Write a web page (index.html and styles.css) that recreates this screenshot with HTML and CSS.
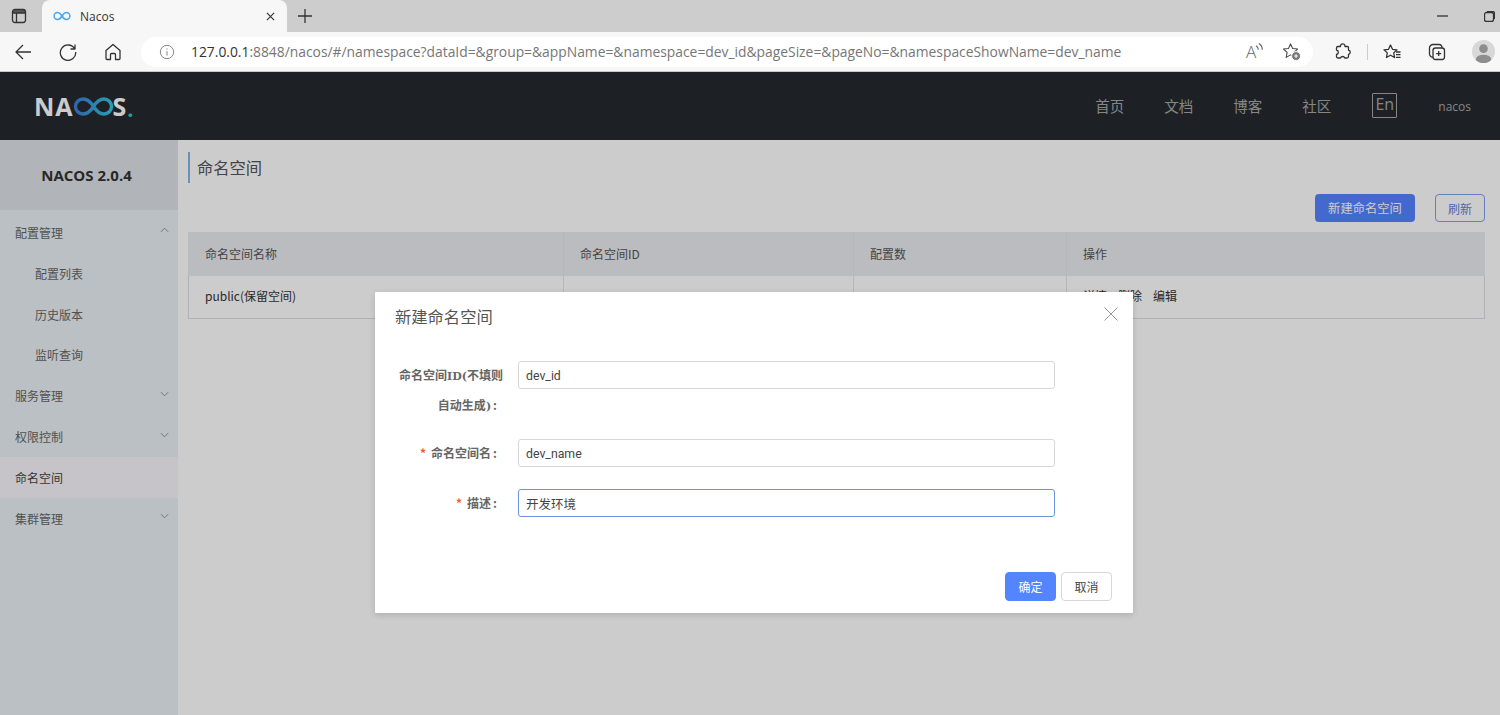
FILE: index.html
```html
<!DOCTYPE html>
<html lang="zh">
<head>
<meta charset="utf-8">
<title>Nacos</title>
<link rel="stylesheet" href="styles.css">
</head>
<body>
<div class="tabbar">
  <svg class="ic tabs-ic" viewBox="0 0 16 16"><rect x="1.500" y="1.500" width="13" height="13" rx="2.500"/><path d="M1.500 5h13M5.500 5v9.500"/><path class="fill" d="M2 2h12v3H2z"/></svg>
  <div class="tab">
    <svg class="fav" viewBox="0 0 18 10"><path d="M9 5C7.500 2.600 6.300 1.500 4.600 1.500a3.500 3.500 0 0 0 0 7C6.300 8.500 7.500 7.400 9 5c1.500-2.400 2.700-3.500 4.400-3.500a3.500 3.500 0 0 1 0 7C11.700 8.500 10.500 7.400 9 5z"/></svg>
    <span class="tab-title">Nacos</span>
    <svg class="ic tab-x" viewBox="0 0 10 10"><path d="M1 1l8 8M9 1l-8 8"/></svg>
  </div>
  <svg class="ic plus" viewBox="0 0 14 14"><path d="M7 0v14M0 7h14"/></svg>
  <div class="win">
    <svg class="ic win-min" viewBox="0 0 11 2"><path d="M0 1h11"/></svg>
    <svg class="ic win-max" viewBox="0 0 11 11"><rect x="0.500" y="1.500" width="9" height="9" rx="2"/><path d="M3 .5h5.500a2 2 0 0 1 2 2V8"/></svg>
  </div>
</div>
<div class="toolbar">
  <svg class="ic nav back" viewBox="0 0 18 18"><path d="M17 9H2M9 2L2 9l7 7"/></svg>
  <svg class="ic nav reload" viewBox="0 0 18 18"><path d="M15.500 5.500A7.700 7.700 0 1 0 16.700 9M16 1.500v4.500h-4.500"/></svg>
  <svg class="ic nav home" viewBox="0 0 18 18"><path d="M2 7.500L9 1.500l7 6v8a1 1 0 0 1-1 1h-3.500v-5a1 1 0 0 0-1-1h-3a1 1 0 0 0-1 1v5H3a1 1 0 0 1-1-1z"/></svg>
  <div class="urlbar">
    <svg class="ic info" viewBox="0 0 18 18"><circle cx="9" cy="9" r="7.500"/><path d="M9 8v5M9 5v1.200"/></svg>
    <span class="url"><span class="url-host">127.0.0.1</span>:8848/nacos/#/namespace?dataId=&amp;group=&amp;appName=&amp;namespace=dev_id&amp;pageSize=&amp;pageNo=&amp;namespaceShowName=dev_name</span>
    <span class="read">A<svg class="ic waves" viewBox="0 0 8 9"><path d="M1 3c1.200.8 1.800 1.800 2 3.500M3.500 1c1.800 1.200 3 3 3 5.500"/></svg></span>
    <svg class="ic fav-add" viewBox="0 0 20 20"><path d="M9 2l2.200 4.800 5.200.6-3.800 3.600 1 5.200L9 13.600l-4.600 2.600 1-5.200-3.800-3.600 5.200-.6z"/><circle class="dot" cx="14.800" cy="14.800" r="4.700"/><path class="dot-plus" d="M14.800 12.800v4M12.800 14.800h4"/></svg>
  </div>
  <svg class="ic tool puzzle" viewBox="0 0 18 18"><path d="M6.500 2.500a2.300 2.300 0 0 1 4.400 0L11 3.500h2.500a1 1 0 0 1 1 1V7a2.200 2.200 0 0 1 0 4.300v2.200a1.500 1.500 0 0 1-1.500 1.500h-2.200a2.300 2.300 0 0 0-4.300 0H4a1.500 1.500 0 0 1-1.500-1.500v-2a2.300 2.300 0 0 0 0-4.500V5A1.500 1.500 0 0 1 4 3.500h2.500z"/></svg>
  <span class="sep"></span>
  <svg class="ic tool favs" viewBox="0 0 18 18"><path d="M7.500 2l2 4.300 4.500.5-3.300 3.100.9 4.600-4.100-2.300-4.100 2.300.9-4.600L1 6.800l4.500-.5z"/><path d="M13 9h4.500M13 11.700h4.500M13 14.400h4.500"/></svg>
  <svg class="ic tool colls" viewBox="0 0 18 18"><rect x="5" y="5" width="11.500" height="11.500" rx="2.500"/><path d="M5 14a3 3 0 0 1-3.500-3V5a3.500 3.500 0 0 1 3.500-3.500h6a3 3 0 0 1 3 3.500M10.700 8v5M8.200 10.700h5"/></svg>
  <span class="avatar"><svg viewBox="0 0 24 24"><circle cx="12" cy="9" r="4.500"/><ellipse cx="12" cy="20" rx="8" ry="4.500"/></svg></span>
</div>

<div class="page">
  <header class="topnav">
    <div class="logo"><span>NA</span><svg class="logo-mark" viewBox="0 0 41 19"><defs><linearGradient id="lg" x1="0" y1="0" x2="1" y2="0"><stop offset="0" stop-color="#3b7fd6"/><stop offset="1" stop-color="#35c5dc"/></linearGradient></defs><path d="M20.500 9.500C17 4 14 2 10 2a7.500 7.500 0 0 0 0 15c4 0 7-2 10.500-7.500 3.500-5.500 6.500-7.500 10.500-7.500a7.500 7.500 0 0 1 0 15c-4 0-7-2-10.500-7.500z"/></svg><span>S</span><span class="logo-dot">.</span></div>
    <nav class="menu">
      <a class="menu-item">首页</a>
      <a class="menu-item">文档</a>
      <a class="menu-item">博客</a>
      <a class="menu-item">社区</a>
      <span class="lang">En</span>
      <span class="user">nacos</span>
    </nav>
  </header>
  <div class="content">
    <aside class="side">
      <div class="side-title">NACOS 2.0.4</div>
      <ul class="side-list">
        <li class="side-item">配置管理<svg class="chev" viewBox="0 0 10 6"><path d="M1 5l4-4 4 4"/></svg></li>
        <li class="side-item sub">配置列表</li>
        <li class="side-item sub">历史版本</li>
        <li class="side-item sub">监听查询</li>
        <li class="side-item">服务管理<svg class="chev" viewBox="0 0 10 6"><path d="M1 1l4 4 4-4"/></svg></li>
        <li class="side-item">权限控制<svg class="chev" viewBox="0 0 10 6"><path d="M1 1l4 4 4-4"/></svg></li>
        <li class="side-item active">命名空间</li>
        <li class="side-item">集群管理<svg class="chev" viewBox="0 0 10 6"><path d="M1 1l4 4 4-4"/></svg></li>
      </ul>
    </aside>
    <main class="main">
      <h1 class="title">命名空间</h1>
      <div class="actions">
        <button class="btn primary">新建命名空间</button>
        <button class="btn ghost">刷新</button>
      </div>
      <div class="table">
        <div class="row head">
          <div class="cell c1">命名空间名称</div>
          <div class="cell c2">命名空间ID</div>
          <div class="cell c3">配置数</div>
          <div class="cell c4">操作</div>
        </div>
        <div class="row body-row">
          <div class="cell c1">public(保留空间)</div>
          <div class="cell c2"></div>
          <div class="cell c3"></div>
          <div class="cell c4"><span class="op">详情</span><span class="op">删除</span><span class="op">编辑</span></div>
        </div>
      </div>
    </main>
  </div>
  <div class="mask"></div>
  <div class="dialog">
    <div class="dlg-head">新建命名空间</div>
    <svg class="dlg-x" viewBox="0 0 14 14"><path d="M.5.5l13 13M13.500.5l-13 13"/></svg>
    <form class="dlg-form">
      <div class="field f-id">
        <label class="lbl"><span class="lbl-over">命名空间<b class="lat">ID(</b>不填则</span><span class="lbl-line">自动生成<b class="lat">)</b><span class="colon">:</span></span></label>
        <div class="input">dev_id</div>
      </div>
      <div class="field f-name">
        <label class="lbl"><i class="req">*</i>命名空间名<span class="colon">:</span></label>
        <div class="input">dev_name</div>
      </div>
      <div class="field f-desc">
        <label class="lbl"><i class="req">*</i>描述<span class="colon">:</span></label>
        <div class="input focus">开发环境</div>
      </div>
    </form>
    <div class="dlg-foot">
      <button class="btn ok">确定</button>
      <button class="btn cancel">取消</button>
    </div>
  </div>
</div>
</body>
</html>
```
FILE: styles.css
```css
* { box-sizing: border-box; }
html, body { margin: 0; height: 715px; overflow: hidden; }
body { font-family: "Noto Sans CJK SC", "Open Sans", sans-serif; background: #fff; color: #333; }
ul { list-style: none; margin: 0; padding: 0; }
.ic { fill: none; stroke: #333; stroke-width: 1.300; flex: none; stroke-linejoin: round; }

.tabbar { height: 32px; background: #cdcdcd; display: flex; align-items: center; position: relative; }
.tabs-ic { width: 16px; height: 16px; margin-left: 11px; }
.tabs-ic .fill { fill: #333; stroke: none; opacity: .75; }
.tab { width: 245px; height: 32px; margin-left: 15px; background: #f7f7f7; border-radius: 8px 8px 0 0; display: flex; align-items: center; padding: 0 10px; font-family: "Open Sans", sans-serif; font-size: 12px; color: #333; }
.fav { width: 18px; height: 10px; margin-left: 1px; fill: none; stroke: #4aa6ef; stroke-width: 1.500; }
.tab-title { margin-left: 9px; flex: 1; }
.tab-x { width: 9px; height: 9px; margin-right: 2px; stroke-width: 1.300; }
.plus { width: 14px; height: 14px; margin-left: 11px; }
.win { margin-left: auto; display: flex; align-items: center; gap: 36px; padding-right: 5px; }
.win-min { width: 11px; height: 2px; }
.win-max { width: 11px; height: 11px; }

.toolbar { height: 40px; background: #f7f7f7; display: flex; align-items: center; border-bottom: 1px solid #c9c9c9; }
.nav { width: 18px; height: 18px; }
.back { margin-left: 14px; }
.reload { margin-left: 27px; }
.home { margin-left: 27px; }
.urlbar { margin-left: 19px; width: 1172px; height: 30px; background: #fff; border-radius: 15px; display: flex; align-items: center; padding-left: 18px; }
.info { width: 16px; height: 16px; stroke: #777; stroke-width: 1; }
.url { margin-left: 16px; font-family: "Open Sans", sans-serif; font-size: 13.850px; color: #767676; white-space: nowrap; width: 1038px; overflow: hidden; }
.url-host { color: #333; }
.read { font-family: "Open Sans", sans-serif; font-weight: 300; font-size: 17px; color: #666; width: 20px; position: relative; margin-left: 17px; line-height: 20px; }
.waves { width: 9px; height: 11px; position: absolute; left: 9px; top: 0; stroke: #666; stroke-width: 1; }
.fav-add { width: 19px; height: 19px; margin-left: 16px; stroke: #444; stroke-width: 1.100; }
.fav-add .dot { fill: #777; stroke: #fff; stroke-width: 1; }
.fav-add .dot-plus { stroke: #fff; }
.tool { width: 18px; height: 18px; }
.puzzle { margin-left: 21px; }
.sep { width: 1px; height: 16px; background: #ccc; margin-left: 15px; }
.favs { margin-left: 15px; }
.colls { margin-left: 27px; }
.avatar { width: 23px; height: 23px; border-radius: 50%; background: #d8d8d8; margin-left: 26px; overflow: hidden; display: block; }
.avatar svg { width: 23px; height: 23px; display: block; fill: #8d8d8d; }

.page { position: relative; height: 643px; background: #fff; }
.topnav { height: 68px; background: #252a2f; display: flex; align-items: center; justify-content: space-between; padding: 0 29px 0 34px; }
.logo { font-family: "Open Sans", sans-serif; font-size: 25px; font-weight: 700; color: #fff; display: flex; align-items: center; line-height: 1; letter-spacing: 1px; }
.logo-mark { width: 41px; height: 19px; fill: none; stroke: url(#lg); stroke-width: 3.400; margin: 0 -1px; }
.logo-dot { color: #22c7d6; font-size: 22px; margin-top: 3px; }
.menu { display: flex; align-items: center; }
.menu-item { font-size: 14.500px; color: #a8a8a8; width: 69px; text-align: center; padding-bottom: 2px; }
.lang { width: 25px; height: 25px; border: 1px solid #a8a8a8; border-radius: 1px; color: #a8a8a8; font-family: "Open Sans", sans-serif; font-size: 16px; text-align: center; line-height: 21px; margin-left: 21px; margin-top: -1px; }
.user { font-family: "Open Sans", sans-serif; font-size: 12px; color: #a8a8a8; margin-left: 41px; }

.content { display: flex; height: 575px; }
.side { width: 178px; background: #eaf0f5; flex: none; }
.side-title { height: 70px; background: #dee2e6; font-family: "Open Sans", sans-serif; font-weight: 700; font-size: 15px; color: #333; display: flex; align-items: center; justify-content: center; padding-right: 5px; }
.side-list { padding-top: 2px; }
.side-item { height: 40.850px; display: flex; align-items: center; justify-content: space-between; padding: 0 9px 0 15px; font-size: 12px; color: #666; }
.side-item.sub { padding-left: 35px; }
.side-item.active { background: #f8f6fa; color: #444; }
.chev { width: 9px; height: 6px; fill: none; stroke: #888; stroke-width: 1; margin-top: -4px; }

.main { flex: 1; padding: 12px 15px 0 10px; min-width: 0; }
.title { margin: 0; height: 31px; border-left: 2px solid #88b7e0; padding-left: 7px; font-size: 16.300px; font-weight: 400; color: #555; line-height: 30px; }
.actions { display: flex; justify-content: flex-end; align-items: center; gap: 20px; margin-top: 10px; height: 30px; }
.btn { font-family: "Noto Sans CJK SC", sans-serif; font-size: 12px; height: 28px; padding: 0; border-radius: 4px; border: 1px solid transparent; }
.btn.primary { width: 100px; background: #5584ff; color: #fff; font-size: 12.300px; }
.btn.ghost { width: 50px; background: transparent; border-color: #7f9ff0; color: #5f82dc; }
.table { margin-top: 9px; border: 1px solid #dcdee3; border-top: 0; font-size: 12px; color: #333; }
.row { display: grid; grid-template-columns: 374px 290px 213px 1fr; }
.head { height: 44px; background: #eaecf0; margin: 0 -1px; padding: 0 1px; }
.body-row { height: 42px; }
.cell { display: flex; align-items: center; padding: 0 0 2px 16px; border-left: 1px solid #e4e6ea; }
.body-row .cell { padding-bottom: 4px; }
.cell.c1 { border-left: 0; }
.head .cell { color: #555; }
.op { margin-right: 11px; }

.mask { position: absolute; inset: 0; background: rgba(0, 0, 0, .2); }
.dialog { position: absolute; left: 375px; top: 220px; width: 758px; height: 321px; background: #fff; border-radius: 1px; box-shadow: 0 2px 6px rgba(0, 0, 0, .15); }
.dlg-head { font-size: 16.300px; color: #555; padding: 12px 20px 0; line-height: 24px; }
.dlg-x { position: absolute; right: 15px; top: 15px; width: 14px; height: 14px; fill: none; stroke: #999; stroke-width: 1; }
.dlg-form { margin-top: 33px; }
.field { display: grid; grid-template-columns: 123px 537px; column-gap: 20px; }
.f-id { height: 78px; }
.f-name { height: 50px; }
.f-desc { height: 50px; }
.lbl { text-align: right; font-size: 12px; color: #666; line-height: 28px; font-weight: 700; padding-right: 1px; }
.lbl-over { display: block; margin-right: -6px; white-space: nowrap; }
.lbl-line { display: block; }
.lat { font-family: "DejaVu Serif", serif; font-weight: 700; font-size: 11px; }
.colon { margin-left: 2px; }
.req { color: #f25b2a; font-style: normal; font-weight: 700; margin-right: 5px; }
.input { height: 28px; border: 1px solid #d5d7db; border-radius: 3px; font-family: Roboto, "Noto Sans CJK SC", sans-serif; font-size: 12.300px; color: #444; line-height: 28px; padding-left: 7px; background: #fff; }
.input.focus { border-color: #6c93dd; font-family: "Noto Sans CJK SC", sans-serif; font-size: 12.500px; }
.dlg-foot { position: absolute; right: 21px; bottom: 12px; display: flex; gap: 5px; }
.btn.ok { width: 51px; height: 29px; background: #5584ff; color: #fff; border-color: #5584ff; }
.btn.cancel { width: 51px; height: 29px; background: #fff; border-color: #d5d7db; color: #444; }
```
